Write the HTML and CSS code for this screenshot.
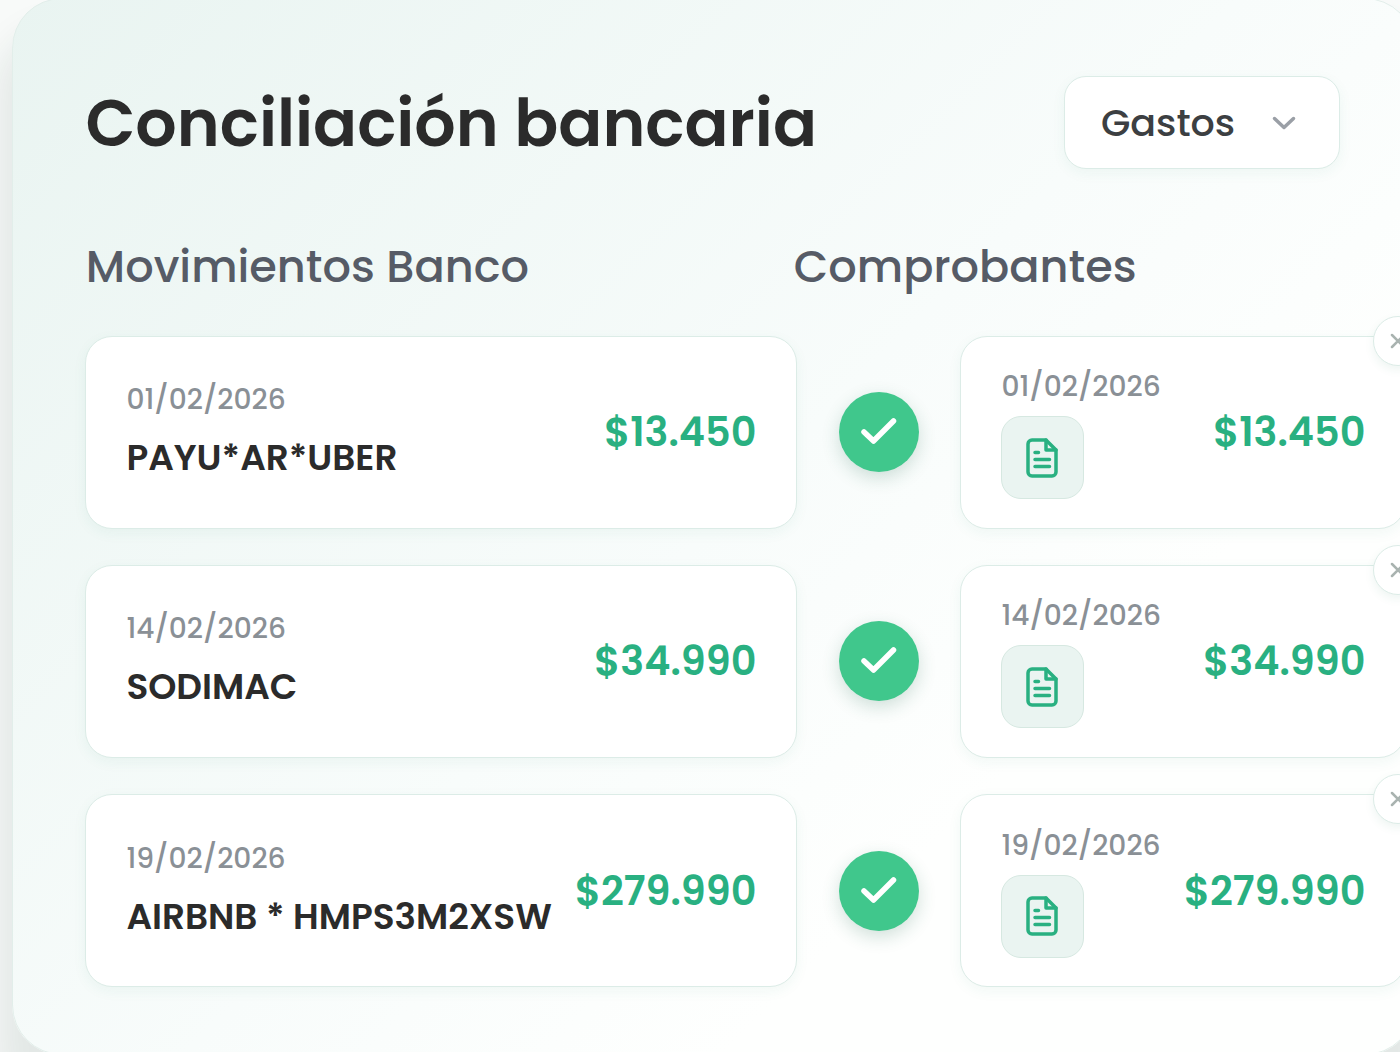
FILE: index.html
```html
<!DOCTYPE html>
<html lang="es">
<head>
    <meta charset="UTF-8">
    <meta name="viewport" content="width=device-width, initial-scale=1.0">
    <title>Conciliación bancaria</title>
    <link rel="stylesheet" href="styles.css">
</head>
<body>
<svg class="sprite" aria-hidden="true">
    <symbol id="icon-check" viewBox="0 0 40 40">
        <path d="M5 20 14.500 29 34.500 9"/>
    </symbol>
    <symbol id="icon-file" viewBox="0 0 32 40">
        <path d="M20 2H6a4 4 0 0 0-4 4v28a4 4 0 0 0 4 4h20a4 4 0 0 0 4-4V12z"/>
        <path d="M20 2v10h10M9 14.500h3.500M9 21.500h14.500M9 28.500h14.500"/>
    </symbol>
    <symbol id="icon-close" viewBox="0 0 16 16">
        <path d="M2 2l12 12M14 2 2 14"/>
    </symbol>
</svg>

<main class="panel">
    <header class="panel-header">
        <h1>Conciliación bancaria</h1>
        <button class="select" type="button">
            <span>Gastos</span>
            <svg class="chevron" viewBox="0 0 24 14"><path d="M2.500 2.500 12 11.500 21.500 2.500"/></svg>
        </button>
    </header>

    <div class="columns">
        <h2 class="bank">Movimientos Banco</h2>
        <h2 class="docs">Comprobantes</h2>
    </div>

    <div class="rows">
        <div class="row">
            <div class="card movement">
                <div class="info">
                    <span class="date">01/02/2026</span>
                    <span class="name">PAYU*AR*UBER</span>
                </div>
                <span class="amount">$13.450</span>
            </div>
            <div class="match"><svg><use href="#icon-check"/></svg></div>
            <div class="card receipt">
                <div class="info">
                    <span class="date">01/02/2026</span>
                    <span class="file"><svg><use href="#icon-file"/></svg></span>
                </div>
                <span class="amount">$13.450</span>
                <button class="close" type="button"><svg><use href="#icon-close"/></svg></button>
            </div>
        </div>

        <div class="row">
            <div class="card movement">
                <div class="info">
                    <span class="date">14/02/2026</span>
                    <span class="name">SODIMAC</span>
                </div>
                <span class="amount">$34.990</span>
            </div>
            <div class="match"><svg><use href="#icon-check"/></svg></div>
            <div class="card receipt">
                <div class="info">
                    <span class="date">14/02/2026</span>
                    <span class="file"><svg><use href="#icon-file"/></svg></span>
                </div>
                <span class="amount">$34.990</span>
                <button class="close" type="button"><svg><use href="#icon-close"/></svg></button>
            </div>
        </div>

        <div class="row">
            <div class="card movement">
                <div class="info">
                    <span class="date">19/02/2026</span>
                    <span class="name">AIRBNB * HMPS3M2XSW</span>
                </div>
                <span class="amount">$279.990</span>
            </div>
            <div class="match"><svg><use href="#icon-check"/></svg></div>
            <div class="card receipt">
                <div class="info">
                    <span class="date">19/02/2026</span>
                    <span class="file"><svg><use href="#icon-file"/></svg></span>
                </div>
                <span class="amount">$279.990</span>
                <button class="close" type="button"><svg><use href="#icon-close"/></svg></button>
            </div>
        </div>
    </div>
</main>
</body>
</html>
```

FILE: styles.css
```css
* {
    box-sizing: border-box;
}

body {
    margin: 0;
    height: 1052px;
    overflow: hidden;
    background-color: #f8faf9;
    font-family: Poppins, Inter, sans-serif;
    font-feature-settings: "cv11";
    color: #2b2b2b;
}

svg {
    display: block;
    fill: none;
    stroke: currentColor;
    stroke-linecap: round;
    stroke-linejoin: round;
}

.sprite {
    display: none;
}

.panel {
    width: 1403px;
    height: 1057px;
    margin: -2px 0 0 12px;
    padding: 77px 0 0 72.400px;
    border: 1px solid #e2eeea;
    border-radius: 50px;
    background: linear-gradient(135deg, #e9f4f1 0%, #f8fcfb 50%, #fefffe 72%, #fefffe 100%);
    box-shadow: 0 44px 36px 14px rgba(20, 60, 45, 0.09);
}

.panel-header {
    display: flex;
    align-items: center;
    justify-content: space-between;
    width: 1254.600px;
    height: 93px;
}

h1 {
    margin: 0;
    padding-top: 1px;
    font-size: 65px;
    font-weight: 600;
    line-height: 93px;
    white-space: nowrap;
}

.select {
    display: flex;
    align-items: center;
    justify-content: space-between;
    width: 276px;
    height: 93px;
    padding: 0 43px 0 36px;
    border: 1px solid #dcece7;
    border-radius: 22px;
    background-color: #fff;
    box-shadow: 0 4px 14px rgba(40, 130, 95, 0.06);
    color: #3c3f42;
    font: inherit;
    font-size: 38px;
    font-weight: 500;
    font-feature-settings: inherit;
}

.chevron {
    width: 24px;
    height: 14px;
    color: #9a9fa6;
    stroke-width: 3.500;
}

.columns {
    display: flex;
    margin-top: 67px;
    padding-left: 0.400px;
}

h2 {
    margin: 0;
    font-size: 44.650px;
    font-weight: 500;
    line-height: 62px;
    color: #565b66;
    white-space: nowrap;
}

.bank {
    width: 708px;
}

.rows {
    display: flex;
    flex-direction: column;
    gap: 36.700px;
    margin-top: 38px;
}

.row {
    display: flex;
    align-items: center;
}

.card {
    position: relative;
    display: flex;
    align-items: center;
    justify-content: space-between;
    height: 192.500px;
    padding: 0 40px;
    border: 1px solid #dcece7;
    border-radius: 27px;
    background-color: #fff;
    box-shadow: 0 4px 14px rgba(40, 130, 95, 0.06);
    white-space: nowrap;
}

.movement {
    width: 712px;
}

.receipt {
    width: 446px;
}

.info {
    display: flex;
    flex-direction: column;
}

.date {
    font-size: 28.100px;
    font-weight: 500;
    line-height: 42px;
    color: #8a9096;
}

.name {
    margin-top: 11px;
    font-size: 35.850px;
    font-weight: 600;
    line-height: 54px;
}

.movement .info {
    padding-bottom: 1px;
}

.receipt .info {
    gap: 9px;
}

.amount {
    font-size: 39.800px;
    font-weight: 600;
    color: #29b081;
}

.match {
    display: grid;
    place-items: center;
    width: 80px;
    height: 80px;
    margin: 0 41px 0 42px;
    border-radius: 50%;
    background-color: #40c78c;
    box-shadow: 0 6px 18px rgba(30, 100, 75, 0.2);
    color: #fff;
}

.match svg {
    width: 40px;
    height: 40px;
    stroke-width: 5.500;
}

.file {
    display: grid;
    place-items: center;
    width: 83px;
    height: 83px;
    padding-right: 1px;
    border: 1px solid #d6e8e1;
    border-radius: 20px;
    background-color: #eaf4f1;
    color: #29b081;
}

.file svg {
    width: 32px;
    height: 40px;
    stroke-width: 3.500;
}

.close {
    position: absolute;
    top: -21px;
    right: -18px;
    display: grid;
    place-items: center;
    width: 50px;
    height: 50px;
    padding: 0;
    border: 1px solid #dcece7;
    border-radius: 50%;
    background-color: #fff;
    box-shadow: 0 4px 10px rgba(40, 130, 95, 0.08);
    color: #a9b3b0;
}

.close svg {
    width: 16px;
    height: 16px;
    stroke-width: 2.500;
}
```
